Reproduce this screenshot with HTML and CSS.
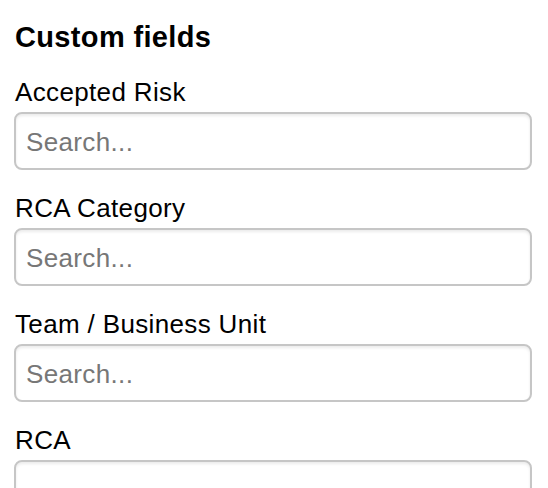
FILE: index.html
```html
<!DOCTYPE html>
<html>
<head>
<meta charset="utf-8">
<link rel="stylesheet" href="styles.css">
</head>
<body>
<div class="panel">
  <h2 class="title">Custom fields</h2>
  <div class="field">
    <label class="label">Accepted Risk</label>
    <input class="search" type="text" placeholder="Search...">
  </div>
  <div class="field">
    <label class="label">RCA Category</label>
    <input class="search" type="text" placeholder="Search...">
  </div>
  <div class="field">
    <label class="label">Team / Business Unit</label>
    <input class="search" type="text" placeholder="Search...">
  </div>
  <div class="field">
    <label class="label">RCA</label>
    <input class="search" type="text" placeholder="">
  </div>
</div>
</body>
</html>
```
FILE: styles.css
```css
html, body {
  margin: 0;
  padding: 0;
  background: #ffffff;
}
body {
  font-family: "Liberation Sans", Arial, sans-serif;
  color: #000;
}
.panel {
  padding: 20px 16px 0 14px;
  display: flex;
  flex-direction: column;
  gap: 23px;
}
.title {
  margin: 0 0 0 1px;
  font-size: 29px;
  line-height: 34px;
  font-weight: bold;
  letter-spacing: 0.35px;
}
.field {
  display: flex;
  flex-direction: column;
  gap: 5px;
}
.label {
  font-size: 26px;
  line-height: 30px;
  margin-left: 1px;
  letter-spacing: 0.35px;
}
.search {
  box-sizing: border-box;
  width: 100%;
  height: 58px;
  margin: 0;
  border: 2px solid #c6c6c6;
  border-radius: 8px;
  box-shadow: inset 0 2px 3px rgba(0,0,0,0.08);
  padding: 2px 10px 0 10px;
  font-family: "Liberation Sans", Arial, sans-serif;
  font-size: 26px;
  letter-spacing: 0.35px;
  color: #000;
  background: #fff;
  outline: none;
}
.search::placeholder {
  color: #777777;
}
```
